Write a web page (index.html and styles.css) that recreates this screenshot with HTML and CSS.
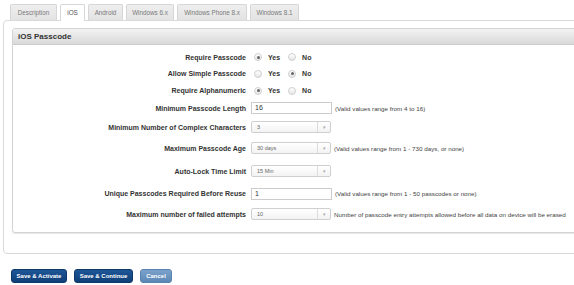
FILE: index.html
```html
<!DOCTYPE html>
<html>
<head>
<meta charset="utf-8">
<link rel="stylesheet" href="styles.css">
</head>
<body>
<div class="page">
  <div class="tabs">
    <div class="tab t-desc">Description</div>
    <div class="tab t-ios active">iOS</div>
    <div class="tab t-android">Android</div>
    <div class="tab t-win6">Windows 6.x</div>
    <div class="tab t-wp8">Windows Phone 8.x</div>
    <div class="tab t-win81">Windows 8.1</div>
  </div>
  <div class="outer">
    <div class="panel">
      <div class="panel-head">iOS Passcode</div>
      <div class="form">
        <div class="label">Require Passcode</div>
        <div class="ctrl">
          <span class="opt"><span class="radio on"></span>Yes</span>
          <span class="opt"><span class="radio"></span>No</span>
        </div>

        <div class="label">Allow Simple Passcode</div>
        <div class="ctrl">
          <span class="opt"><span class="radio"></span>Yes</span>
          <span class="opt"><span class="radio on"></span>No</span>
        </div>

        <div class="label">Require Alphanumeric</div>
        <div class="ctrl">
          <span class="opt"><span class="radio on"></span>Yes</span>
          <span class="opt"><span class="radio"></span>No</span>
        </div>

        <div class="label">Minimum Passcode Length</div>
        <div class="ctrl">
          <span class="input">16</span>
          <span class="help">(Valid values range from 4 to 16)</span>
        </div>

        <div class="label">Minimum Number of Complex Characters</div>
        <div class="ctrl">
          <span class="select"><span class="val">3</span><span class="arrow">&#9662;</span></span>
        </div>

        <div class="label">Maximum Passcode Age</div>
        <div class="ctrl">
          <span class="select"><span class="val">30 days</span><span class="arrow">&#9662;</span></span>
          <span class="help">(Valid values range from 1 - 730 days, or none)</span>
        </div>

        <div class="label">Auto-Lock Time Limit</div>
        <div class="ctrl">
          <span class="select"><span class="val">15 Min</span><span class="arrow">&#9662;</span></span>
        </div>

        <div class="label">Unique Passcodes Required Before Reuse</div>
        <div class="ctrl">
          <span class="input">1</span>
          <span class="help">(Valid values range from 1 - 50 passcodes or none)</span>
        </div>

        <div class="label">Maximum number of failed attempts</div>
        <div class="ctrl">
          <span class="select"><span class="val">10</span><span class="arrow">&#9662;</span></span>
          <span class="help">Number of passcode entry attempts allowed before all data on device will be erased</span>
        </div>
      </div>
    </div>
  </div>
  <div class="actions">
    <span class="btn b-act">Save &amp; Activate</span>
    <span class="btn b-cont">Save &amp; Continue</span>
    <span class="btn b-cancel light">Cancel</span>
  </div>
</div>
</body>
</html>
```

FILE: styles.css
```css
html, body {
  margin: 0;
  padding: 0;
  background: #fff;
  overflow: hidden;
}
body {
  font-family: "Liberation Sans", Arial, sans-serif;
  color: #333;
}
.page {
  padding: 4px 0 0 3px;
  width: 660px;
}
.tabs {
  display: flex;
  gap: 3px;
  padding-left: 7px;
  height: 16px;
}
.tab {
  box-sizing: border-box;
  height: 16px;
  line-height: 15px;
  text-align: center;
  font-size: 6.3px;
  color: #7a7a7a;
  background: linear-gradient(#eeeeee, #e3e3e3);
  border: 1px solid #d6d6d6;
  border-bottom: none;
  border-radius: 2px 2px 0 0;
  white-space: nowrap;
}
.t-desc { width: 47px; }
.t-ios { width: 25px; }
.t-android { width: 35px; }
.t-win6 { width: 48px; }
.t-wp8 { width: 70px; }
.t-win81 { width: 49px; }
.tab.active {
  background: #fff;
  color: #555;
  height: 17px;
  position: relative;
  z-index: 1;
}
.outer {
  border: 1px solid #d9d9d9;
  border-radius: 4px;
  padding: 7px 0 20px 8px;
  width: 640px;
}
.panel {
  border: 1px solid #d3d3d3;
  border-radius: 3px;
  box-shadow: 0 1px 1px #e6e6e6;
}
.panel-head {
  height: 15px;
  line-height: 15px;
  padding-left: 5px;
  font-size: 8px;
  font-weight: bold;
  color: #333;
  background: linear-gradient(#f3f3f3, #d9d9d9);
  border-bottom: 1px solid #cdcdcd;
  border-radius: 3px 3px 0 0;
}
.form {
  display: grid;
  grid-template-columns: 233px 1fr;
  grid-template-rows: 16px 17px 17px 18px 20px 22px 24px 21px 20px;
  column-gap: 5px;
  padding: 4px 0 8px 0;
}
.label {
  align-self: center;
  text-align: right;
  font-size: 7px;
  font-weight: bold;
  color: #333;
  white-space: nowrap;
}
.ctrl {
  display: flex;
  align-items: center;
}
.opt {
  display: flex;
  align-items: center;
  gap: 6px;
  font-size: 7px;
  font-weight: bold;
  color: #333;
  margin-left: 3px;
  margin-right: 5px;
}
.radio {
  width: 6px;
  height: 6px;
  border: 1px solid #cfcfcf;
  border-radius: 50%;
  background: linear-gradient(#ffffff, #e6e6e6);
  display: flex;
  align-items: center;
  justify-content: center;
}
.radio.on::after {
  content: "";
  width: 3px;
  height: 3px;
  border-radius: 50%;
  background: #666;
}
.input {
  box-sizing: border-box;
  width: 81px;
  height: 12px;
  line-height: 10px;
  border: 1px solid #cccccc;
  padding-left: 3px;
  font-size: 7px;
  color: #333;
  background: #fff;
}
.select {
  box-sizing: border-box;
  width: 80px;
  height: 12px;
  border: 1px solid #cfcfcf;
  border-radius: 2px;
  display: flex;
  background: linear-gradient(#ffffff, #f3f3f3);
}
.select .val {
  flex: 1;
  line-height: 10px;
  padding-left: 5px;
  font-size: 5.5px;
  color: #666;
}
.select .arrow {
  width: 12px;
  border-left: 1px solid #dcdcdc;
  text-align: center;
  line-height: 10px;
  font-size: 5px;
  color: #aaa;
}
.help {
  margin-left: 3px;
  font-size: 6.25px;
  color: #444;
  white-space: nowrap;
}
.actions {
  display: flex;
  gap: 7px;
  padding: 15px 0 0 8px;
}
.btn {
  box-sizing: border-box;
  height: 14px;
  line-height: 12px;
  text-align: center;
  font-size: 6px;
  font-weight: bold;
  color: #fff;
  background: linear-gradient(#1d5697, #0f3f78);
  border: 1px solid #0d386b;
  border-radius: 3px;
  white-space: nowrap;
}
.b-act { width: 56px; }
.b-cont { width: 59px; }
.b-cancel { width: 32px; }
.btn.light {
  background: linear-gradient(#7aa1cb, #5d88b6);
  border-color: #5a82ad;
}
```
